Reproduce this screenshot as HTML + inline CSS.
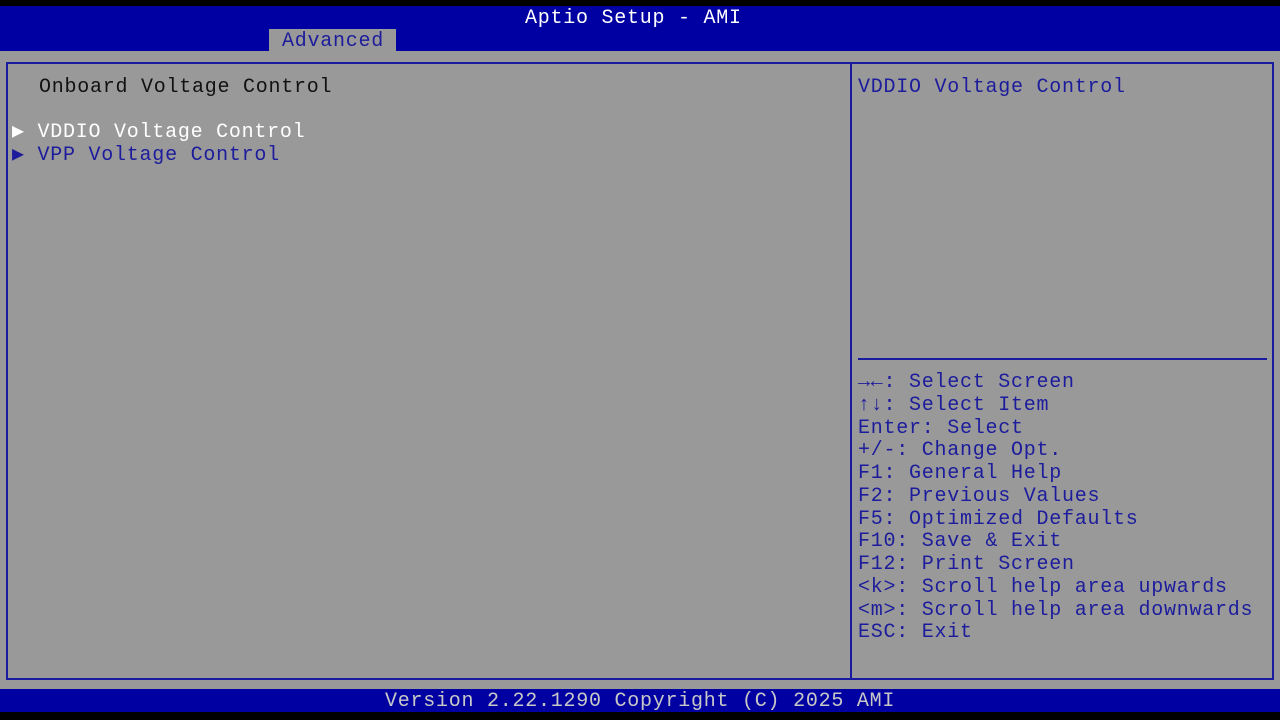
<!DOCTYPE html><html><head><style>
body{margin:0;width:1280px;height:720px;background:#000;position:relative;overflow:hidden;font-family:"Liberation Mono",monospace;font-size:20px;letter-spacing:0.75px;}
div{position:absolute;white-space:pre;line-height:23px;}
.b{color:#1c1c9c}
</style></head><body>
<div style="left:0;top:6px;width:1280px;height:45px;background:#0000a2"></div>
<div style="left:0;top:51px;width:1280px;height:638px;background:#999"></div>
<div style="left:0;top:689px;width:1280px;height:23px;background:#0000a2"></div>
<div style="left:525px;top:7px;color:#fff">Aptio Setup - AMI</div>
<div style="left:269px;top:29px;width:127px;height:22px;background:#999"></div>
<div class="b" style="left:282px;top:30px">Advanced</div>
<div style="left:6px;top:62px;width:1264px;height:614px;border:2px solid #1a1aa0"></div>
<div style="left:850px;top:63px;width:2px;height:615px;background:#1a1aa0"></div>
<div style="left:858px;top:358px;width:409px;height:2px;background:#1a1aa0"></div>
<div style="left:39px;top:76px;color:#111">Onboard Voltage Control</div>
<div style="left:12px;top:121px;color:#fff">▶ VDDIO Voltage Control</div>
<div class="b" style="left:12px;top:144px">▶ VPP Voltage Control</div>
<div class="b" style="left:858px;top:76px">VDDIO Voltage Control</div>
<div class="b" style="left:858px;top:372px;line-height:22.75px"><b>→←</b>: Select Screen
<b>↑↓</b>: Select Item
Enter: Select
+/-: Change Opt.
F1: General Help
F2: Previous Values
F5: Optimized Defaults
F10: Save &amp; Exit
F12: Print Screen
&lt;k&gt;: Scroll help area upwards
&lt;m&gt;: Scroll help area downwards
ESC: Exit</div>
<div style="left:385px;top:690px;color:#c8c8c8;line-height:23px">Version 2.22.1290 Copyright (C) 2025 AMI</div>
</body></html>
